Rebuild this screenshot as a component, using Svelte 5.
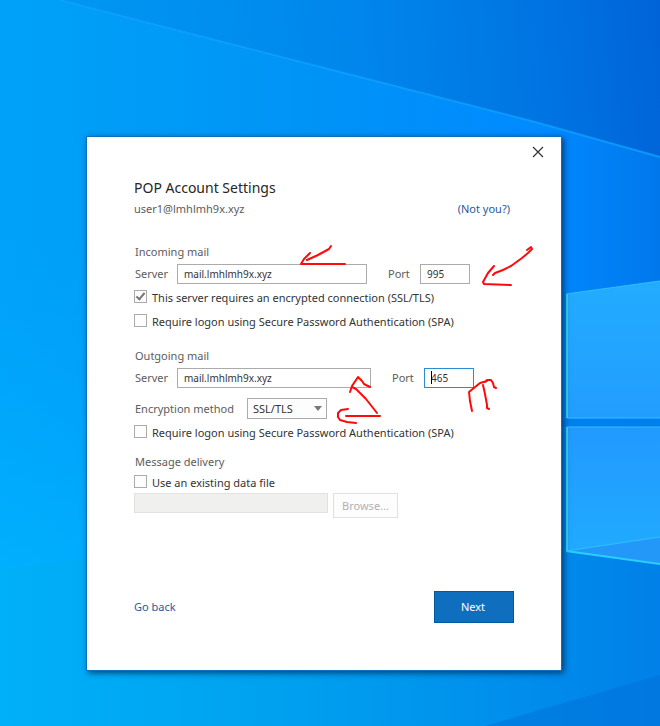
<script>
  let incomingServer = $state('mail.lmhlmh9x.xyz');
  let incomingPort = $state('995');
  let incomingSsl = $state(true);
  let incomingSpa = $state(false);
  let outgoingServer = $state('mail.lmhlmh9x.xyz');
  let outgoingPort = $state('465');
  let encryption = $state('SSL/TLS');
  let outgoingSpa = $state(false);
  let useDataFile = $state(false);
</script>

<div class="desktop">
  <svg class="wallpaper" viewBox="0 0 660 726" preserveAspectRatio="none" aria-hidden="true">
    <defs>
      <linearGradient id="base" x1="0" y1="0" x2="1" y2="0">
        <stop offset="0" stop-color="#00a2f8" />
        <stop offset="0.45" stop-color="#0094f6" />
        <stop offset="0.82" stop-color="#008aff" />
        <stop offset="1" stop-color="#0078ec" />
      </linearGradient>
      <linearGradient id="sky" gradientUnits="userSpaceOnUse" x1="60" y1="60" x2="660" y2="10">
        <stop offset="0" stop-color="#0098f2" />
        <stop offset="0.5" stop-color="#0086ec" />
        <stop offset="0.8" stop-color="#0074e2" />
        <stop offset="1" stop-color="#0064d8" />
      </linearGradient>
      <radialGradient id="glow" gradientUnits="userSpaceOnUse" cx="0" cy="640" r="420">
        <stop offset="0" stop-color="#00b4ff" />
        <stop offset="1" stop-color="#00a8ff" stop-opacity="0" />
      </radialGradient>
      <linearGradient id="floor" x1="0" y1="0" x2="1" y2="0">
        <stop offset="0" stop-color="#00b0f8" />
        <stop offset="0.4" stop-color="#00a2f0" />
        <stop offset="0.75" stop-color="#0090ec" />
        <stop offset="1" stop-color="#0080e8" />
      </linearGradient>
      <linearGradient id="paneTop" x1="0" y1="0" x2="0" y2="1">
        <stop offset="0" stop-color="#22acff" />
        <stop offset="1" stop-color="#229dff" />
      </linearGradient>
      <linearGradient id="paneBottom" x1="0" y1="0" x2="0" y2="1">
        <stop offset="0" stop-color="#2299ff" />
        <stop offset="1" stop-color="#20acff" />
      </linearGradient>
    </defs>
    <rect width="660" height="726" fill="url(#base)" />
    <rect width="660" height="726" fill="url(#glow)" />
    <path d="M59 0H660V157L535 122Z" fill="url(#sky)" />
    <path d="M59 0L535 122L660 157" fill="none" stroke="#10a0ff" stroke-width="2" opacity="0.8" />
    <path d="M0 570L90 557L560 550L660 563V726H0Z" fill="url(#floor)" />
    <path d="M485 726L660 675V726Z" fill="#0070d8" opacity="0.5" />
    <path d="M566 294L660 281V418H566Z" fill="url(#paneTop)" />
    <path d="M566 427H660V563L566 551Z" fill="url(#paneBottom)" />
    <path d="M566 551L660 537V563Z" fill="#2498f8" />
    <path d="M566 294L660 281M567 418H660M567 427H660M566 551L660 537" fill="none" stroke="#30c0ff" />
    <path d="M566 551L660 564" fill="none" stroke="#28d0ff" stroke-width="2" />
    <path d="M567 294V418M567 427V551" fill="none" stroke="#30dcf0" stroke-width="2" />
    <rect x="560" y="419" width="100" height="7" fill="#0080ec" />
  </svg>

  <main class="dialog">
    <div class="titlebar">
      <button class="close" type="button" aria-label="Close">
        <svg width="12" height="12" viewBox="0 0 12 12"><path d="M1 1L11 11M11 1L1 11" fill="none" stroke="#333" stroke-width="1.2" /></svg>
      </button>
    </div>

    <form onsubmit={(event) => event.preventDefault()}>
      <h1>POP Account Settings</h1>
      <div class="account">
        <span>user1@lmhlmh9x.xyz</span>
        <a href="#switch">(Not you?)</a>
      </div>

      <section class="incoming">
        <h2>Incoming mail</h2>
        <div class="row">
          <label class="name" for="in-server">Server</label>
          <input id="in-server" class="text server" type="text" bind:value={incomingServer} />
          <label class="port-name" for="in-port">Port</label>
          <input id="in-port" class="text port" type="text" bind:value={incomingPort} />
        </div>
        <label class="check"><input type="checkbox" bind:checked={incomingSsl} />This server requires an encrypted connection (SSL/TLS)</label>
        <label class="check"><input type="checkbox" bind:checked={incomingSpa} />Require logon using Secure Password Authentication (SPA)</label>
      </section>

      <section class="outgoing">
        <h2>Outgoing mail</h2>
        <div class="row">
          <label class="name" for="out-server">Server</label>
          <input id="out-server" class="text server wide" type="text" bind:value={outgoingServer} />
          <label class="port-name" for="out-port">Port</label>
          <span class="active">
            <input id="out-port" class="text port" type="text" bind:value={outgoingPort} />
            <i class="caret"></i>
          </span>
        </div>
        <div class="row method">
          <label for="encryption">Encryption method</label>
          <span class="select">
            <select id="encryption" bind:value={encryption}>
              <option>None</option>
              <option>SSL/TLS</option>
              <option>STARTTLS</option>
              <option>Auto</option>
            </select>
            <svg width="8" height="5" viewBox="0 0 8 5" aria-hidden="true"><path d="M0 0H8L4 5Z" fill="#777" /></svg>
          </span>
        </div>
        <label class="check"><input type="checkbox" bind:checked={outgoingSpa} />Require logon using Secure Password Authentication (SPA)</label>
      </section>

      <section class="delivery">
        <h2>Message delivery</h2>
        <label class="check"><input type="checkbox" bind:checked={useDataFile} />Use an existing data file</label>
        <div class="file">
          <input class="text" type="text" aria-label="Data file" disabled={!useDataFile} />
          <button type="button" disabled={!useDataFile}>Browse...</button>
        </div>
      </section>

      <footer>
        <a href="#back">Go back</a>
        <button class="next" type="submit">Next</button>
      </footer>
    </form>

    <svg class="ink" width="476" height="535" viewBox="86 136 476 535" aria-hidden="true">
      <g fill="none" stroke="#ff0a0a" stroke-width="2" stroke-linecap="round" stroke-linejoin="round">
        <path d="M331 246L329 249L318 255L307 260M310 253L304 259L301 264H345" />
        <path d="M527 250L531 247L532 249L528 253L522 258L511 266L503 270L495 273L493 275M494 266L488 273L483 282L484 284L511 285" />
        <path d="M350 392L352 386L358 377L362 381L364 384L370 387M352 387L356 389L366 399L377 413M346 416H380M348 409L341 410L338 413L338 417L340 420L347 422L356 423" />
        <path d="M472 411L470 401L469 392L480 383L487 381M485 382L487 380L491 380L493 383L494 387L496 388M483 385L485 394L487 405L487 408L489 409" />
      </g>
    </svg>
  </main>
</div>

<style>
  :global(body) {
    margin: 0;
  }

  .desktop {
    position: relative;
    box-sizing: border-box;
    min-height: 100vh;
    padding: 136px 98px 55px 86px;
    overflow: hidden;
    background: #0094f6;
    color: #5c5c5c;
    font: 11px/18px "Noto Sans", "Open Sans", sans-serif;
  }

  .wallpaper {
    position: absolute;
    inset: 0;
    width: 100%;
    height: 100%;
  }

  .dialog {
    position: relative;
    box-sizing: border-box;
    border: 1px solid #106ebe;
    background: #fff;
    box-shadow: 2px 2px 6px rgba(0, 30, 70, 0.7);
  }

  .titlebar {
    display: flex;
    justify-content: flex-end;
    padding: 0 10px;
  }

  button,
  input,
  select {
    box-sizing: border-box;
    margin: 0;
    font: inherit;
  }

  .close {
    display: grid;
    place-items: center;
    width: 26px;
    height: 30px;
    padding: 0;
    border: 0;
    background: none;
  }

  form {
    padding: 9px 47px 47px;
  }

  h1,
  h2 {
    margin: 0;
    font-weight: 400;
  }

  h1 {
    color: #262626;
    font-size: 14px;
    line-height: 24px;
  }

  h2 {
    padding-left: 1px;
    font-size: 11px;
    line-height: 18px;
  }

  a {
    color: #2b579a;
    text-decoration: none;
  }

  .account {
    display: flex;
    justify-content: space-between;
    padding-right: 4px;
  }

  .incoming {
    margin-top: 25px;
  }

  .outgoing {
    margin-top: 14px;
  }

  .delivery {
    margin-top: 9px;
  }

  .row {
    display: flex;
    align-items: center;
    height: 20px;
    margin: 3px 0 1px;
    padding-left: 1px;
  }

  .name {
    width: 42px;
  }

  .port-name {
    width: 32px;
    margin-left: 21px;
  }

  .text {
    height: 20px;
    padding: 0 6px;
    border: 1px solid #ababab;
    background: #fff;
    color: #333;
    font-size: 10px;
    outline: 0;
  }

  .server {
    width: 190px;
  }

  .server.wide {
    width: 194px;
  }

  .port {
    width: 50px;
  }

  .active {
    position: relative;
    display: flex;
  }

  .active .text {
    border-color: #2a8dd4;
  }

  .caret {
    position: absolute;
    top: 3px;
    left: 7px;
    width: 1px;
    height: 13px;
    background: #000;
  }

  .method {
    height: 21px;
    margin-top: 10px;
  }

  .method label {
    width: 112px;
  }

  .select {
    position: relative;
    display: flex;
  }

  .select svg {
    position: absolute;
    top: 8px;
    right: 5px;
    pointer-events: none;
  }

  select {
    width: 80px;
    height: 21px;
    padding: 0 5px;
    border: 1px solid #ababab;
    border-radius: 0;
    background: #fdfdfd;
    color: #333;
    line-height: 18px;
    appearance: none;
  }

  .check {
    display: flex;
    box-sizing: border-box;
    align-items: center;
    gap: 5px;
    height: 24px;
    padding-top: 2px;
    color: #333;
  }

  .delivery .check {
    height: 22px;
  }

  .check input {
    display: grid;
    place-items: center;
    width: 13px;
    height: 13px;
    margin-bottom: 4px;
    border: 1px solid #ababab;
    background: #fdfdfd;
    appearance: none;
  }

  .check input:checked::before {
    width: 3px;
    height: 7px;
    margin-bottom: 2px;
    border: solid #777;
    border-width: 0 2px 2px 0;
    content: "";
    transform: rotate(40deg);
  }

  .file {
    display: flex;
    align-items: flex-start;
    gap: 5px;
  }

  .file .text {
    width: 194px;
    border-color: #e1e1e1;
    background: #f0f0ef;
  }

  .file button {
    width: 65px;
    height: 25px;
    padding: 0;
    border: 1px solid #e1e1e1;
    background: #fdfdfd;
    color: #b1b1b1;
  }

  footer {
    display: flex;
    align-items: center;
    justify-content: space-between;
    margin-top: 73px;
  }

  .next {
    width: 80px;
    height: 32px;
    padding: 0 2px 0 0;
    border: 1px solid #005a9e;
    background: #106ebe;
    color: #fff;
  }

  .ink {
    position: absolute;
    top: -1px;
    left: -1px;
    pointer-events: none;
  }
</style>
